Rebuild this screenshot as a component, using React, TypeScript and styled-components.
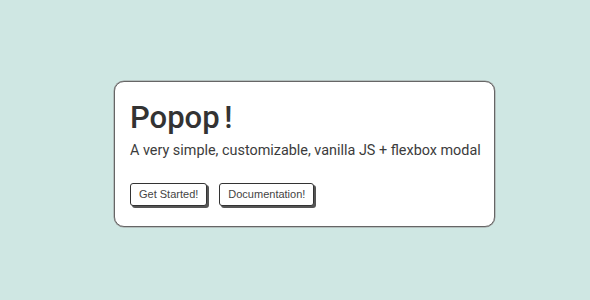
import React from 'react';
import styled, { createGlobalStyle } from 'styled-components';

const GlobalStyle = createGlobalStyle`
  html, body {
    margin: 0;
    padding: 0;
    height: 100%;
    background: #cfe7e3;
  }
  #root {
    height: 100%;
  }
`;

const Page = styled.div`
  display: flex;
  align-items: flex-start;
  justify-content: center;
  width: 590px;
  height: 300px;
  padding: 81px 0 0 19px;
  box-sizing: border-box;
`;

const Modal = styled.div`
  box-sizing: border-box;
  width: 381px;
  padding: 16px 15px 20px;
  background: #fff;
  border: 1px solid #666;
  border-radius: 10px;
  box-shadow: 0 0 0 0.5px #999;
  color: #333;
  font-family: Roboto, 'Liberation Sans', sans-serif;
`;

const Title = styled.h1`
  margin: 0 0 4px;
  font-size: 31px;
  font-weight: 500;
  line-height: 40px;
  word-spacing: -3px;
`;

const Subtitle = styled.p`
  margin: 0 0 23px;
  font-size: 14.4px;
  line-height: 18px;
  color: #3c3c3c;
  white-space: nowrap;
`;

const Actions = styled.div`
  display: flex;
  gap: 12px;
`;

const Button = styled.button`
  padding: 0 8px;
  height: 23px;
  background: #fff;
  border: 1px solid #333;
  border-radius: 3px;
  box-shadow: 2px 2px 0 #555;
  color: #444;
  font-family: 'Liberation Sans', Arial, sans-serif;
  font-size: 11px;
  line-height: 21px;
  cursor: pointer;
`;

export default function App() {
  return (
    <>
      <GlobalStyle />
      <Page>
        <Modal>
          <Title>Popop !</Title>
          <Subtitle>A very simple, customizable, vanilla JS + flexbox modal</Subtitle>
          <Actions>
            <Button>Get Started!</Button>
            <Button>Documentation!</Button>
          </Actions>
        </Modal>
      </Page>
    </>
  );
}
